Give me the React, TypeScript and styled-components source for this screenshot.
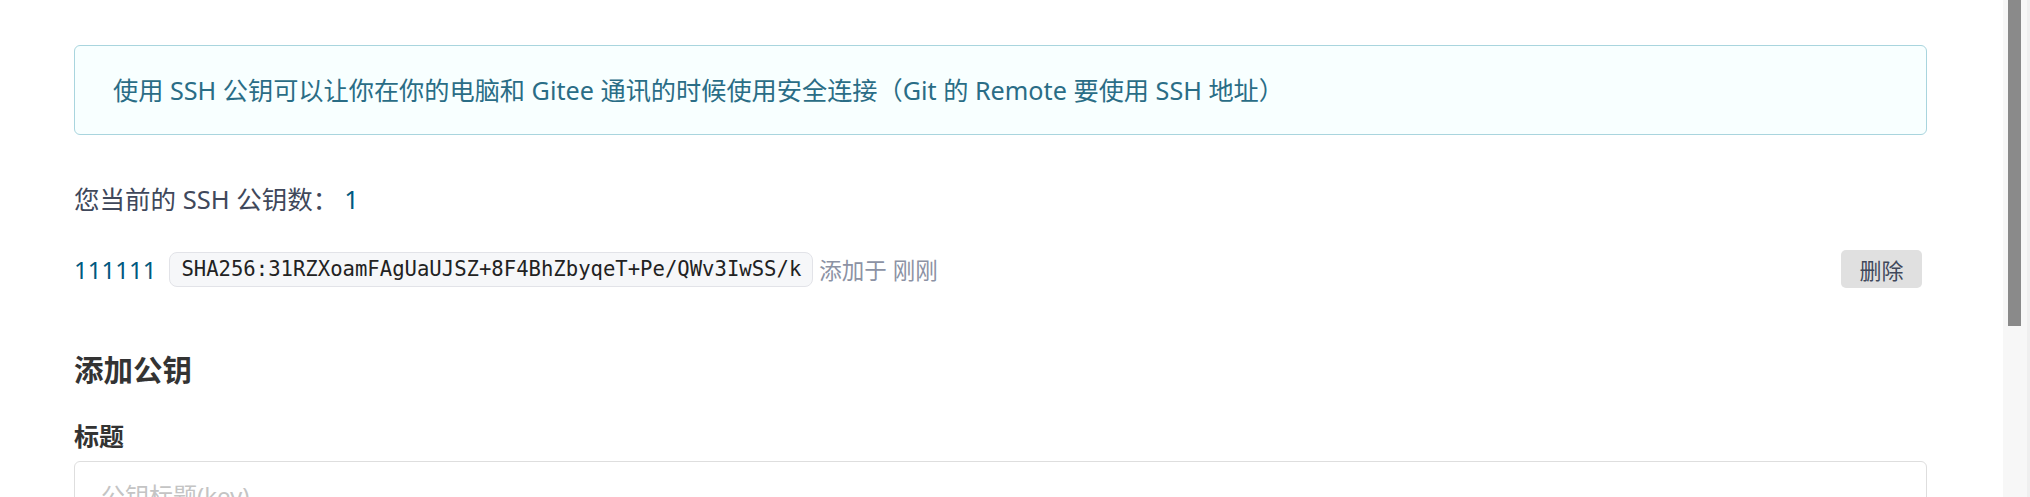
import styled, { createGlobalStyle } from "styled-components";

const GlobalStyle = createGlobalStyle`
  html, body {
    margin: 0;
    padding: 0;
    background: #ffffff;
    font-family: "Noto Sans", "Noto Sans CJK SC", sans-serif;
    color: #40485b;
  }
  * {
    box-sizing: border-box;
  }
`;

const Page = styled.div`
  display: flex;
  height: 497px;
  overflow: hidden;
`;

const Main = styled.div`
  flex: 1;
  padding: 45px 76px 0 74px;
`;

const ScrollTrack = styled.div`
  width: 27px;
  background: #f7f7f7;
  border-right: 3px solid #efefef;
`;

const ScrollThumb = styled.div`
  margin-left: 5px;
  width: 13px;
  height: 326px;
  background: #8a8a8a;
`;

const InfoMessage = styled.div`
  display: flex;
  align-items: center;
  height: 90px;
  padding: 0 38px 3px;
  background: #f8ffff;
  border: 1px solid #a9d5de;
  border-radius: 6px;
  color: #2a6d86;
  font-size: 25.2px;
`;

const CountLine = styled.div`
  margin-top: 46px;
  line-height: 36px;
  font-size: 25.5px;
  color: #40485b;
`;

const Num = styled.span`
  margin-left: 6px;
  color: #005980;
`;

const KeyRow = styled.div`
  display: flex;
  align-items: center;
  height: 38px;
  margin-top: 33px;
`;

const KeyName = styled.span`
  color: #005980;
  font-size: 24px;
  margin-right: 13px;
`;

const Fingerprint = styled.code`
  display: inline-flex;
  align-items: center;
  height: 35px;
  padding: 0 11px;
  background: #f6f7f9;
  border: 1px solid #e2e3e8;
  border-radius: 8px;
  font-family: "DejaVu Sans Mono", "Liberation Mono", monospace;
  font-size: 20.6px;
  color: #222;
`;

const Meta = styled.span`
  margin-left: 6px;
  font-size: 22.5px;
  color: #8c92a4;
`;

const DeleteButton = styled.button`
  margin-left: auto;
  margin-right: 5px;
  width: 81px;
  height: 38px;
  border: none;
  border-radius: 5px;
  background: #e0e0e0;
  color: #40485b;
  font-family: inherit;
  font-size: 22px;
  padding: 0;
`;

const Heading = styled.h3`
  margin: 62px 0 0;
  line-height: 40px;
  font-size: 29.5px;
  font-weight: 700;
  color: #333;
`;

const Label = styled.label`
  display: block;
  margin-top: 29px;
  line-height: 34px;
  font-size: 25px;
  font-weight: 700;
  color: #333;
`;

const TextInput = styled.input`
  display: block;
  width: 100%;
  height: 68px;
  margin-top: 8px;
  padding: 0 26px;
  border: 1px solid #dedede;
  border-radius: 6px;
  font-family: inherit;
  font-size: 24px;
  outline: none;
  &::placeholder {
    color: #c4c4c4;
  }
`;

function App() {
  return (
    <Page>
      <GlobalStyle />
      <Main>
        <InfoMessage>
          使用 SSH 公钥可以让你在你的电脑和 Gitee 通讯的时候使用安全连接（Git 的 Remote 要使用 SSH 地址）
        </InfoMessage>
        <CountLine>
          您当前的 SSH 公钥数：<Num>1</Num>
        </CountLine>
        <KeyRow>
          <KeyName>111111</KeyName>
          <Fingerprint>SHA256:31RZXoamFAgUaUJSZ+8F4BhZbyqeT+Pe/QWv3IwSS/k</Fingerprint>
          <Meta>添加于 刚刚</Meta>
          <DeleteButton>删除</DeleteButton>
        </KeyRow>
        <Heading>添加公钥</Heading>
        <Label>标题</Label>
        <TextInput placeholder="公钥标题(key)" />
      </Main>
      <ScrollTrack>
        <ScrollThumb />
      </ScrollTrack>
    </Page>
  );
}

export default App;
